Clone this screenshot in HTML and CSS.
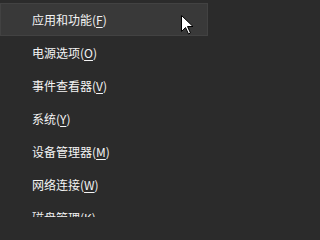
FILE: index.html
```html
<!DOCTYPE html>
<html lang="zh-CN">
<head>
<meta charset="utf-8">
<link rel="stylesheet" href="styles.css">
</head>
<body>
<div class="menu">
  <div class="item active">应用和功能(<u>F</u>)</div>
  <div class="item">电源选项(<u>O</u>)</div>
  <div class="item">事件查看器(<u>V</u>)</div>
  <div class="item">系统(<u>Y</u>)</div>
  <div class="item">设备管理器(<u>M</u>)</div>
  <div class="item">网络连接(<u>W</u>)</div>
  <div class="item">磁盘管理(<u>K</u>)</div>
  <svg class="cursor" width="13" height="20" viewBox="0 0 13 20">
    <path d="M0.5 0.5 L0.5 16.5 L4.5 12.5 L7.5 19 L9.5 18 L6.5 11.5 L12 11.5 Z" fill="#fff" stroke="#000" stroke-width="1" stroke-linejoin="miter"/>
  </svg>
</div>
</body>
</html>
```
FILE: styles.css
```css
html, body {
  margin: 0;
  padding: 0;
  background: #2b2b2b;
}
.menu {
  position: relative;
  width: 208px;
  height: 217px;
  overflow: hidden;
  padding-top: 3px;
  box-sizing: border-box;
  background: #2b2b2b;
  font-family: "Noto Sans CJK SC", "Microsoft YaHei", sans-serif;
  font-size: 12px;
  color: #f4f4f4;
}
.item {
  height: 33px;
  line-height: 33px;
  padding-left: 32px;
  box-sizing: border-box;
  white-space: nowrap;
}
.item u {
  text-decoration: underline;
  text-underline-offset: 2px;
}
.item.active {
  background: #393939;
  border: 1px solid #424242;
  line-height: 31px;
  padding-left: 31px;
}
.cursor {
  position: absolute;
  left: 181px;
  top: 15px;
}
```
